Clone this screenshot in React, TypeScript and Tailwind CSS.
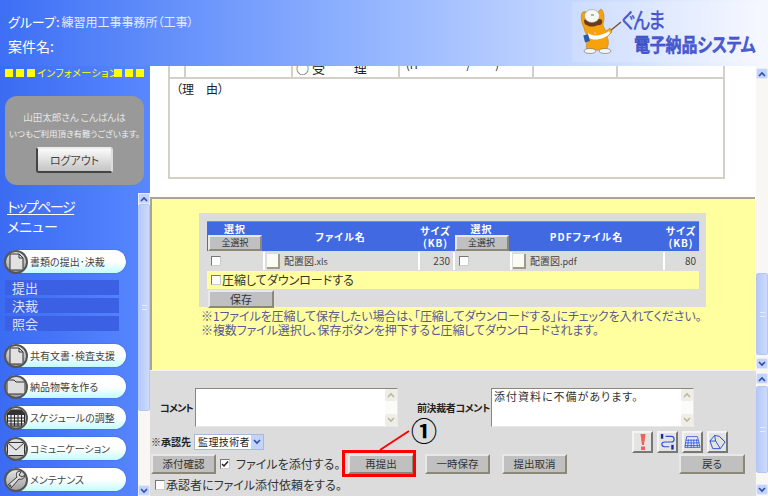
import React from "react";

function Chevron({ up, color = "#2c4fa8" }: { up?: boolean; color?: string }) {
  return (
    <svg width="8" height="6" viewBox="0 0 8 6" fill="none">
      <path d={up ? "M1 5 L4 2 L7 5" : "M1 1 L4 4 L7 1"} stroke={color} strokeWidth="1.6" />
    </svg>
  );
}

function ArrowBtn({ up, className }: { up?: boolean; className?: string }) {
  return (
    <div className={"h-[11px] w-full shrink-0 rounded-[2px] bg-[#c3d3fb] border border-[#e4ebff] flex items-center justify-center " + (className || "")}>
      <Chevron up={up} />
    </div>
  );
}

function Scrollbar({ thumb, className, top = true, bottom = true }: { thumb: string; className?: string; top?: boolean; bottom?: boolean }) {
  return (
    <div className={"w-[12px] shrink-0 flex flex-col bg-[#f8f7f3] " + (className || "")}>
      {top && <ArrowBtn up />}
      <div className={"w-full rounded-[2px] bg-linear-to-r from-[#b5caf9] to-[#cddafc] border border-[#b3c6f5] flex items-center justify-center " + thumb}>
        <div className="w-[5px] h-[5px] border-y border-[#e6edff]" />
      </div>
      <div className="flex-1" />
      {bottom && <ArrowBtn />}
    </div>
  );
}

function Btn({ children, className }: { children: React.ReactNode; className?: string }) {
  return (
    <div className={"flex items-center justify-center bg-[#c0c0c0] border-2 border-t-[#e8e8e8] border-l-[#e8e8e8] border-r-[#8c8878] border-b-[#8c8878] leading-none text-[#333] " + (className || "")}>
      {children}
    </div>
  );
}

function Check({ checked, className }: { checked?: boolean; className?: string }) {
  return (
    <div className={"w-[10px] h-[10px] shrink-0 bg-white border border-t-[#777] border-l-[#777] border-r-[#ccc] border-b-[#ccc] flex items-center justify-center " + (className || "")}>
      {checked && (
        <svg width="8" height="8" viewBox="0 0 8 8" fill="none">
          <path d="M1 4 L3 6 L7 1.5" stroke="#222" strokeWidth="1.5" />
        </svg>
      )}
    </div>
  );
}

function Circle({ children }: { children: React.ReactNode }) {
  return (
    <div className="w-[24px] h-[24px] -ml-px shrink-0 rounded-full bg-linear-to-b from-[#e4e4e4] to-[#a0a0a0] border-2 border-[#555] flex items-center justify-center overflow-hidden">
      {children}
    </div>
  );
}

const DocIcon = (
  <svg width="16" height="18" viewBox="0 0 16 18" fill="#e2e2e2" stroke="#333" strokeWidth="1">
    <path d="M2 1 H11 L15 5 V17 H2 Z" />
    <path d="M11 1 V5 H15" fill="none" />
  </svg>
);
const FolderIcon = (
  <svg width="20" height="16" viewBox="0 0 20 16" fill="#ddd" stroke="#333" strokeWidth="1">
    <path d="M1 15 V3 L3 1 H8 L10 3 H19 V15 Z" />
  </svg>
);
const CalIcon = (
  <svg width="18" height="18" viewBox="0 0 18 18">
    <rect x="0.5" y="1" width="17" height="16" fill="#eee" stroke="#222" />
    <rect x="0.5" y="1" width="17" height="5" fill="#333" />
    <path d="M0 9 H18 M0 12 H18 M0 15 H18 M4 6 V17 M7.5 6 V17 M11 6 V17 M14.5 6 V17" stroke="#222" strokeWidth="1" />
  </svg>
);
const MailIcon = (
  <svg width="18" height="14" viewBox="0 0 18 14" fill="#e4e4e4" stroke="#333" strokeWidth="1">
    <rect x="0.5" y="0.5" width="17" height="13" />
    <path d="M1 1 L9 8 L17 1" fill="none" />
  </svg>
);
const WrenchIcon = (
  <svg width="20" height="20" viewBox="0 0 20 20" fill="#ddd" stroke="#333" strokeWidth="1">
    <path d="M13 1 C10 2 10 5 11 7 L2 15 C1 17 3 19 5 18 L13 9 C16 10 19 8 19 5 L16 7 L13 5 L15 2 Z" />
    <circle cx="4" cy="16" r="1" fill="none" />
  </svg>
);

function Pill({ icon, label, className }: { icon: React.ReactNode; label: string; className?: string }) {
  return (
    <div className={"ml-[5px] w-[121px] h-[23px] rounded-full bg-linear-to-b from-white via-white to-[#c2fbfb] shadow-[0_0_1px_#1a3aa0] flex items-center " + (className || "")}>
      <Circle>{icon}</Circle>
      <span className="ml-[2px] text-[10px] leading-none text-[#444] whitespace-nowrap">{label}</span>
    </div>
  );
}

function SubItem({ children }: { children: React.ReactNode }) {
  return (
    <div className="ml-[5px] w-[114px] h-[15px] pl-[7px] bg-[#3c60e4] text-[13px] leading-[15px] text-[#d8e4ff]">{children}</div>
  );
}

function Squares() {
  return (
    <div className="flex gap-[3px]">
      <div className="w-[8px] h-[8px] bg-[#ffff00]" />
      <div className="w-[8px] h-[8px] bg-[#ffff00]" />
      <div className="w-[8px] h-[8px] bg-[#ffff00]" />
    </div>
  );
}

function Mascot() {
  return (
    <svg width="46" height="50" viewBox="0 0 46 50" className="shrink-0">
      <path d="M32 25 L43 16" stroke="#6b4a30" strokeWidth="1.2" />
      <path d="M5 6 C2 8 3 16 6 22 C7 27 9 29 10 32 C8 37 8 40 9 44 L28 44 C31 40 31 34 29 31 L34 26 L32 22 L28 25 C26 22 25 20 25 18 C27 12 26 5 23 3 C21 4 20 6 20 8 L10 8 C9 6 7 5 5 6 Z" fill="#f5a20c" stroke="#b0741a" strokeWidth="0.5" />
      <path d="M6 14 C9 13 21 12 24 14 C25 17 23 20 20 19 C16 21 11 21 9 19 C7 19 6 17 6 14 Z" fill="#6e3a1c" />
      <ellipse cx="14" cy="10" rx="7.5" ry="6.5" fill="#f6f8f4" stroke="#8a8a80" strokeWidth="0.5" />
      <path d="M13 9 H16" stroke="#3a8a4a" strokeWidth="1" />
      <path d="M10 27 C14 31 24 30 31 25 L32 27 C28 33 15 36 10 31 Z" fill="#fff" />
      <circle cx="17" cy="27" r="1" fill="#ffb0b0" />
      <rect x="6" y="29" width="5" height="7" fill="#2a5aa8" transform="rotate(-15 8 32)" />
      <ellipse cx="12" cy="45" rx="6" ry="2.5" fill="#f4f4f0" stroke="#555" strokeWidth="0.5" />
      <ellipse cx="27" cy="45" rx="6" ry="2.5" fill="#f4f4f0" stroke="#555" strokeWidth="0.5" />
    </svg>
  );
}

function TaBox({ text, className }: { text?: string; className?: string }) {
  return (
    <div className={"h-[39px] flex bg-white border border-t-[#8c8878] border-l-[#8c8878] border-r-[#e8e8e4] border-b-[#e8e8e4] " + (className || "")}>
      <div className="flex-1 pl-[2px] font-normal text-[11px] leading-[14px] tracking-[1px] text-[#333]">{text}</div>
      <div className="w-[12px] flex flex-col justify-between bg-[#fbfbf8]">
        <div className="h-[12px] rounded-[2px] bg-[#eeeee6] flex items-center justify-center"><Chevron up color="#b8b8a8" /></div>
        <div className="h-[12px] rounded-[2px] bg-[#eeeee6] flex items-center justify-center"><Chevron color="#b8b8a8" /></div>
      </div>
    </div>
  );
}

function ToolBtn({ children }: { children: React.ReactNode }) {
  return (
    <div className="w-[21px] h-[22px] bg-[#e4e4e0] border-2 border-t-[#f4f4f4] border-l-[#f4f4f4] border-r-[#777] border-b-[#777] flex items-center justify-center">
      {children}
    </div>
  );
}

function HeadCell({ className, children }: { className?: string; children: React.ReactNode }) {
  return <div className={"flex flex-col items-center justify-center text-white font-bold text-[10px] leading-[12px] tracking-[1px] " + (className || "")}>{children}</div>;
}

function FileBox() {
  return <div className="w-[13px] h-[15px] shrink-0 bg-[#fbfbf5] border-r-2 border-b-2 border-[#a09a88]" />;
}

export default function App() {
  return (
    <div className="relative w-[768px] h-[496px] overflow-hidden flex flex-col bg-white font-['Noto_Sans_CJK_JP','Liberation_Sans',sans-serif] [font-feature-settings:'palt']">
      {/* Header */}
      <div className="h-[66px] shrink-0 flex bg-linear-to-r from-[#3d6ef5] to-[#f6f8ff]">
        <div className="pl-[8px] pt-[12px] text-white">
          <div className="h-[24px] flex items-baseline leading-[20px] whitespace-nowrap">
            <span className="text-[13px]">グループ:</span>
            <span className="text-[12px] ml-[2px] text-[#e4ecff]">練習用工事事務所（工事）</span>
          </div>
          <div className="text-[14px] leading-[20px]">案件名:</div>
        </div>
        <div className="ml-auto mr-[6px] mt-[2px] w-[190px] h-[60px] pl-[6px] pt-[4px] flex bg-white/15">
          <Mascot />
          <div className="-ml-[3px] flex flex-col text-[#4a5cd6] [-webkit-text-stroke:0.3px_#2a3cb8] whitespace-nowrap">
            <div className="text-[18px] leading-[20px] tracking-[-1.5px] scale-y-[1.2] origin-top">ぐんま</div>
            <div className="ml-[13px] mt-[6px] text-[16px] leading-[20px] font-bold tracking-[-0.2px] scale-y-[1.2] origin-top">電子納品システム</div>
          </div>
        </div>
      </div>

      <div className="flex-1 flex min-h-0">
        {/* Sidebar */}
        <div className="w-[150px] shrink-0 flex flex-col bg-linear-to-r from-[#3b6bf2] to-[#5887ff]">
          <div className="h-[30px] pl-[5px] pt-[2px] flex items-start">
            <div className="flex items-center h-[10px]">
              <Squares />
              <span className="mx-[2px] w-[75px] text-[10px] tracking-[0.4px] leading-none text-[#ffff00] whitespace-nowrap">インフォメーション</span>
              <Squares />
            </div>
          </div>
          <div className="ml-[5px] w-[139px] h-[89px] rounded-[12px] bg-[#999999] flex flex-col items-center pt-[15px]">
            <div className="text-[9.5px] leading-[12px] text-[#e4e4e4] whitespace-nowrap">山田太郎さん こんばんは</div>
            <div className="mt-[4px] text-[8.5px] leading-[12px] text-[#eee] whitespace-nowrap">いつもご利用頂き有難うございます。</div>
            <div className="mt-[8px] w-[77px] h-[26px] flex items-center justify-center bg-linear-to-b from-[#fafafa] to-[#c4c4c4] border-2 border-t-[#eee] border-r-[#ddd] border-l-[#444] border-b-[#444] rounded-[3px] text-[11px] text-[#444]">ログアウト</div>
          </div>
          <div className="flex-1 flex min-h-0 mt-[8px]">
            <div className="flex-1 min-w-0 flex flex-col">
              <div className="ml-[7px] mt-[3px] h-[20px] text-[14px] leading-[20px] tracking-[-1.5px] text-white underline underline-offset-2">トップページ</div>
              <div className="ml-[7px] h-[20px] text-[14px] leading-[20px] text-white">メニュー</div>
              <Pill className="mt-[14px]" icon={DocIcon} label="書類の提出･決裁" />
              <div className="mt-[7px] flex flex-col gap-[3px]">
                <SubItem>提出</SubItem>
                <SubItem>決裁</SubItem>
                <SubItem>照会</SubItem>
              </div>
              <Pill className="mt-[13px]" icon={DocIcon} label="共有文書･検査支援" />
              <Pill className="mt-[8px]" icon={FolderIcon} label="納品物等を作る" />
              <Pill className="mt-[8px]" icon={CalIcon} label="スケジュールの調整" />
              <Pill className="mt-[8px]" icon={MailIcon} label="コミュニケーション" />
              <Pill className="mt-[8px]" icon={WrenchIcon} label="メンテナンス" />
            </div>
            <Scrollbar thumb="h-[207px]" />
          </div>
        </div>

        {/* Main */}
        <div className="flex-1 min-w-0 flex flex-col">
          {/* Top frame */}
          <div className="h-[131px] shrink-0 flex">
            <div className="flex-1 overflow-hidden bg-white">
              <div className="ml-[18px] w-[557px] border-x-2 border-b-2 border-[#d4d0c8]">
                <div className="h-[13px] flex border-b-2 border-[#d4d0c8] overflow-hidden">
                  <div className="w-[16px] border-r-2 border-[#d4d0c8]" />
                  <div className="w-[107px] border-r-2 border-[#d4d0c8]" />
                  <div className="w-[107px] border-r-2 border-[#d4d0c8] pl-[3px] text-[13px] leading-[14px] -mt-[5px] text-[#222] whitespace-pre h-[20px]">○ 受　　 理</div>
                  <div className="w-[134px] border-r-2 border-[#d4d0c8] pl-[6px] text-[11px] leading-[12px] -mt-[8px] text-[#222] whitespace-pre h-[24px]">(H　　 ー　 / 　　)</div>
                  <div className="w-[84px] border-r-2 border-[#d4d0c8]" />
                  <div className="flex-1" />
                </div>
                <div className="h-[98px] pl-[6px] pt-[1px] text-[12px] leading-[18px] text-[#222]">（理　由）</div>
              </div>
            </div>
            <Scrollbar thumb="h-0 border-0 hidden" className="pt-[2px]" bottom={false} />
          </div>

          {/* Yellow frame */}
          <div className="h-[173px] shrink-0 flex">
            <div className="flex-1 flex bg-white">
              <div className="w-[605px] bg-[#ffff9f] border-l-2 border-t-2 border-[#a8a498] pt-[14px] pl-[47px]">
                <div className="w-[507px] h-[94px] bg-[#dcdcdc] pt-[8px] pl-[8px]">
                  <div className="w-[492px]">
                    <div className="h-[30px] flex bg-[#4169e1] border-t border-[#6f8ff0]">
                      <HeadCell className="w-[56px]">
                        <span>選択</span>
                        <Btn className="w-[54px] h-[16px] font-normal tracking-normal text-[9px]">全選択</Btn>
                      </HeadCell>
                      <HeadCell className="w-[155px]">ファイル名</HeadCell>
                      <HeadCell className="w-[35px]"><span>サイズ</span><span>(KB)</span></HeadCell>
                      <HeadCell className="w-[57px]">
                        <span>選択</span>
                        <Btn className="w-[54px] h-[16px] font-normal tracking-normal text-[9px]">全選択</Btn>
                      </HeadCell>
                      <HeadCell className="w-[153px]">PDFファイル名</HeadCell>
                      <HeadCell className="flex-1"><span>サイズ</span><span>(KB)</span></HeadCell>
                    </div>
                    <div className="mt-px h-[18px] flex text-[10px] leading-none text-[#444]">
                      <div className="w-[56px] flex items-center pl-[4px]"><Check /></div>
                      <div className="w-[155px] flex items-center pl-[2px] border-l-2 border-white">
                        <FileBox />
                        <span className="ml-[4px]">配置図<span className="text-[9px]">.xls</span></span>
                      </div>
                      <div className="w-[35px] flex items-center justify-end pr-[3px] border-l-2 border-white">230</div>
                      <div className="w-[57px] flex items-center pl-[4px] border-l-2 border-white"><Check /></div>
                      <div className="w-[153px] flex items-center pl-[1px] border-l-2 border-white">
                        <FileBox />
                        <span className="ml-[4px]">配置図<span className="text-[9px]">.pdf</span></span>
                      </div>
                      <div className="flex-1 flex items-center justify-end pr-[3px] border-l-2 border-white">80</div>
                    </div>
                    <div className="mt-px h-[18px] flex items-center pl-[4px] bg-[#ffff9f] text-[12px] leading-none text-[#333]">
                      <Check />
                      <span className="ml-[1px]">圧縮してダウンロードする</span>
                    </div>
                    <Btn className="mt-px w-[66px] h-[18px] ml-px text-[11px]">保存</Btn>
                  </div>
                </div>
                <div className="ml-[2px] mt-[2px] text-[12px] leading-[14px] tracking-[-0.1px] text-[#5a5a90] whitespace-nowrap">
                  <div>※1ファイルを圧縮して保存したい場合は、「圧縮してダウンロードする」にチェックを入れてください。</div>
                  <div>※複数ファイル選択し、保存ボタンを押下すると圧縮してダウンロードされます。</div>
                </div>
              </div>
            </div>
            <Scrollbar thumb="h-[82px] mt-[76px]" top={false} className="pb-px" />
          </div>

          {/* Bottom frame */}
          <div className="flex-1 min-h-0 flex">
            <div className="flex-1 min-w-0 bg-[#dcdcdc] border-t border-[#f2f2f2] pt-[17px]">
              <div className="h-[39px] flex items-center text-[10px] font-bold leading-none text-[#222]">
                <div className="w-[43px] text-right mr-[2px] tracking-[-0.8px] whitespace-nowrap">コメント</div>
                <TaBox className="w-[203px]" />
                <div className="w-[74px] ml-[19px] tracking-[-0.4px] whitespace-nowrap">前決裁者コメント</div>
                <TaBox className="w-[203px]" text="添付資料に不備があります。" />
              </div>
              <div className="h-[25px] flex items-center mt-[2px]">
                <div className="ml-[1px] w-[43px] text-[10px] font-bold leading-none text-[#222] whitespace-nowrap">※承認先</div>
                <div className="w-[70px] h-[16px] bg-white border border-[#a8b8d8] flex items-center text-[10px] leading-none tracking-[0.4px] text-[#222] pl-[3px]">
                  <span className="flex-1 whitespace-nowrap">監理技術者</span>
                  <div className="w-[12px] h-full bg-[#c3d3fb] flex items-center justify-center"><Chevron /></div>
                </div>
                <div className="ml-auto mr-[28px] flex gap-[4px]">
                  <ToolBtn>
                    <svg width="8" height="18" viewBox="0 0 8 18"><path d="M1.5 1 H6.5 L5 12 H3 Z" fill="#f06060" /><rect x="2" y="13.5" width="4" height="3.5" fill="#f06060" /></svg>
                  </ToolBtn>
                  <ToolBtn>
                    <svg width="18" height="18" viewBox="0 0 18 18" fill="none" stroke="#2a50d8" strokeWidth="1.2">
                      <path d="M7 3 H13 C17 3 17 9 13 9 H6 C2 9 2 14 6 14 H11" />
                      <rect x="2" y="0.5" width="2.5" height="5" fill="#1a2a90" stroke="none" />
                      <rect x="13" y="12" width="2.5" height="5" fill="#1a2a90" stroke="none" />
                    </svg>
                  </ToolBtn>
                  <ToolBtn>
                    <svg width="19" height="16" viewBox="0 0 19 16" fill="none" stroke="#2a50d8" strokeWidth="0.9">
                      <path d="M3 2 H15 L18 14 H1 Z" fill="#e6ebff" />
                      <path d="M2 6 H16 M1.5 9 H17 M1 12 H18 M5 5 L4 14 M8 5 V14 M11 5 V14 M14 5 L15 14" />
                    </svg>
                  </ToolBtn>
                  <ToolBtn>
                    <svg width="18" height="18" viewBox="0 0 18 18" fill="none" stroke="#2a50d8" strokeWidth="1">
                      <path d="M1 8 L6 2 L11 3 L17 9 L12 16 L4 16 L1 8 Z M6 2 L7 8 L1 8 M7 8 L12 16 M11 3 L17 9" />
                    </svg>
                  </ToolBtn>
                </div>
              </div>
              <div className="h-[20px] flex items-center">
                <Btn className="ml-[1px] w-[65px] h-[20px] text-[10.5px]">添付確認</Btn>
                <Check checked className="ml-[4px]" />
                <span className="ml-[6px] w-[112px] text-[12px] leading-none text-[#333] whitespace-nowrap">ファイルを添付する。</span>
                <Btn className="w-[66px] h-[20px] text-[10.5px]">再提出</Btn>
                <Btn className="ml-[11px] w-[65px] h-[20px] text-[10.5px]">一時保存</Btn>
                <Btn className="ml-[12px] w-[65px] h-[20px] text-[10.5px]">提出取消</Btn>
                <Btn className="ml-[112px] w-[66px] h-[20px] text-[10.5px]">戻る</Btn>
              </div>
              <div className="h-[16px] mt-[3px] pl-[5px] flex items-center">
                <Check />
                <span className="ml-[1px] text-[12px] leading-none text-[#333] whitespace-nowrap">承認者にファイル添付依頼をする。</span>
              </div>
            </div>
            <Scrollbar thumb="h-[87px] mt-[2px]" className="pt-[3px] pb-px" />
          </div>
        </div>
      </div>

      {/* Annotation overlay */}
      <div className="absolute left-[342px] top-[450px] w-[74px] h-[27px] border-[3px] border-[#ff0000]" />
      <svg className="absolute left-[376px] top-[428px]" width="36" height="24" viewBox="0 0 36 24">
        <path d="M4 22 L33 3" stroke="#ff0000" strokeWidth="2" />
      </svg>
      <div className="absolute left-[411px] top-[415px] text-[26px] leading-[30px] font-bold text-black">①</div>
    </div>
  );
}
